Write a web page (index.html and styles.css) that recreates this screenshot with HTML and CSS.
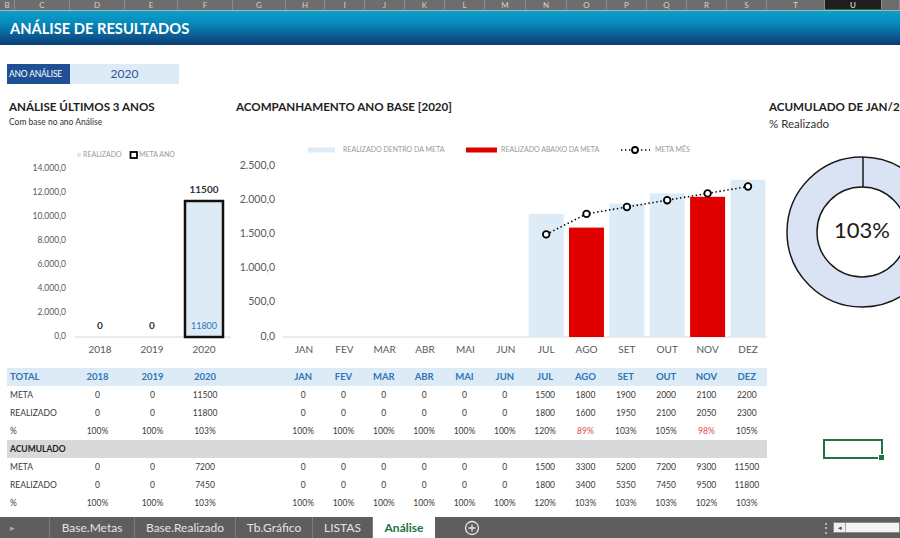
FILE: index.html
```html
<!DOCTYPE html>
<html lang="pt-BR">
<head>
  <meta charset="UTF-8" />
  <title>Análise de Resultados</title>
  <link rel="stylesheet" href="styles.css">
</head>
<body>

  <!-- Spreadsheet column headers -->
  <div class="colheads">
    <span>B</span><span>C</span><span>D</span><span>E</span><span>F</span><span>G</span><span>H</span>
    <span>I</span><span>J</span><span>K</span><span>L</span><span>M</span><span>N</span><span>O</span>
    <span>P</span><span>Q</span><span>R</span><span>S</span><span>T</span><span class="sel">U</span><span></span>
  </div>

  <!-- Title bar -->
  <div class="titlebar">ANÁLISE DE RESULTADOS</div>

  <div class="sheet">
    <!-- Year selector -->
    <div class="ano">
      <span class="ano-label">ANO ANÁLISE</span>
      <span class="ano-value">2020</span>
    </div>

    <!-- Charts row -->
    <div class="charts">
      <section class="panel panel-left">
        <div class="panel-head">
          <h2>ANÁLISE ÚLTIMOS 3 ANOS</h2>
          <p>Com base no ano Análise</p>
        </div>
        <svg class="chart" width="236" height="236">
          <rect x="77" y="21" width="4" height="4" fill="#ddebf7"/>
          <text class="lg" x="83" y="23">REALIZADO</text>
          <rect x="130.5" y="20" width="6.5" height="6" fill="#fff" stroke="#000" stroke-width="1.8"/>
          <text class="lg" x="139" y="23">META ANO</text>

          <g class="ax" text-anchor="end">
            <text x="66" y="37">14.000,0</text>
            <text x="66" y="61">12.000,0</text>
            <text x="66" y="85">10.000,0</text>
            <text x="66" y="109">8.000,0</text>
            <text x="66" y="133">6.000,0</text>
            <text x="66" y="157">4.000,0</text>
            <text x="66" y="181">2.000,0</text>
            <text x="66" y="205">0,0</text>
          </g>

          <line x1="75" y1="205" x2="231" y2="205" stroke="#d9d9d9" stroke-width="1"/>
          <rect x="185" y="69" width="38" height="136" fill="#ddebf7" stroke="#111" stroke-width="2.5"/>

          <text class="dl" x="100" y="194" text-anchor="middle">0</text>
          <text class="dl" x="152" y="194" text-anchor="middle">0</text>
          <text class="dl" x="204" y="58" text-anchor="middle">11500</text>
          <text class="dl-in" x="204" y="195" text-anchor="middle">11800</text>

          <g class="cat" text-anchor="middle">
            <text x="100" y="218">2018</text>
            <text x="152" y="218">2019</text>
            <text x="204" y="218">2020</text>
          </g>
        </svg>
      </section>

      <section class="panel panel-mid">
        <div class="panel-head">
          <h2>ACOMPANHAMENTO ANO BASE [2020]</h2>
        </div>
        <svg class="chart" width="532" height="236">
          <!-- legend -->
          <line x1="72" y1="18" x2="99" y2="18" stroke="#ddebf7" stroke-width="5"/>
          <text class="lg" x="107" y="18">REALIZADO DENTRO DA META</text>
          <line x1="230" y1="18" x2="261" y2="18" stroke="#e00000" stroke-width="5"/>
          <text class="lg" x="265" y="18">REALIZADO ABAIXO DA META</text>
          <line x1="385" y1="18" x2="414" y2="18" class="meta-line"/>
          <circle cx="399" cy="18" r="3" class="meta-dot"/>
          <text class="lg" x="419" y="18">META MÊS</text>

          <g class="ax ax-mid" text-anchor="end">
            <text x="39" y="34">2.500,0</text>
            <text x="39" y="68.2">2.000,0</text>
            <text x="39" y="102.4">1.500,0</text>
            <text x="39" y="136.6">1.000,0</text>
            <text x="39" y="170.8">500,0</text>
            <text x="39" y="205">0,0</text>
          </g>

          <line x1="47" y1="205" x2="531" y2="205" stroke="#d9d9d9" stroke-width="1"/>

          <!-- bars -->
          <rect x="292.7" y="81.9" width="35" height="123.1" fill="#ddebf7"/>
          <rect x="333" y="95.6" width="35" height="109.4" fill="#e00000"/>
          <rect x="373.4" y="71.6" width="35" height="133.4" fill="#ddebf7"/>
          <rect x="413.7" y="61.4" width="35" height="143.6" fill="#ddebf7"/>
          <rect x="454.1" y="64.8" width="35" height="140.2" fill="#e00000"/>
          <rect x="494.5" y="47.7" width="35" height="157.3" fill="#ddebf7"/>

          <!-- meta line -->
          <polyline class="meta-line" points="310.2,102.4 350.5,81.9 390.9,75 431.2,68.2 471.6,61.4 512,54.5"/>
          <circle class="meta-dot" cx="310.2" cy="102.4" r="3.3"/>
          <circle class="meta-dot" cx="350.5" cy="81.9" r="3.3"/>
          <circle class="meta-dot" cx="390.9" cy="75" r="3.3"/>
          <circle class="meta-dot" cx="431.2" cy="68.2" r="3.3"/>
          <circle class="meta-dot" cx="471.6" cy="61.4" r="3.3"/>
          <circle class="meta-dot" cx="512" cy="54.5" r="3.3"/>

          <g class="cat" text-anchor="middle">
            <text x="68" y="218">JAN</text>
            <text x="108.4" y="218">FEV</text>
            <text x="148.7" y="218">MAR</text>
            <text x="189.1" y="218">ABR</text>
            <text x="229.4" y="218">MAI</text>
            <text x="269.8" y="218">JUN</text>
            <text x="310.2" y="218">JUL</text>
            <text x="350.5" y="218">AGO</text>
            <text x="390.9" y="218">SET</text>
            <text x="431.2" y="218">OUT</text>
            <text x="471.6" y="218">NOV</text>
            <text x="512" y="218">DEZ</text>
          </g>
        </svg>
      </section>

      <section class="panel panel-right">
        <div class="panel-head">
          <h2>ACUMULADO DE JAN/2020</h2>
          <p>% Realizado</p>
        </div>
        <svg class="chart" width="132" height="236">
          <circle cx="94" cy="100" r="75" fill="#dae3f3" stroke="#1a1a1a" stroke-width="1.5"/>
          <circle cx="94" cy="100" r="45" fill="#fff" stroke="#1a1a1a" stroke-width="1.5"/>
          <line x1="95" y1="25" x2="95" y2="55" stroke="#1a1a1a" stroke-width="1.5"/>
          <text class="donut-val" x="94" y="100" text-anchor="middle">103%</text>
        </svg>
      </section>
    </div>

    <!-- Data table -->
    <div class="grid">
      <div class="hd lbl">TOTAL</div><div class="hd">2018</div><div class="hd">2019</div><div class="hd">2020</div><div class="hd"></div>
      <div class="hd">JAN</div><div class="hd">FEV</div><div class="hd">MAR</div><div class="hd">ABR</div><div class="hd">MAI</div><div class="hd">JUN</div>
      <div class="hd">JUL</div><div class="hd">AGO</div><div class="hd">SET</div><div class="hd">OUT</div><div class="hd">NOV</div><div class="hd">DEZ</div>

      <div class="lbl">META</div><div>0</div><div>0</div><div>11500</div><div></div>
      <div>0</div><div>0</div><div>0</div><div>0</div><div>0</div><div>0</div>
      <div>1500</div><div>1800</div><div>1900</div><div>2000</div><div>2100</div><div>2200</div>

      <div class="lbl">REALIZADO</div><div>0</div><div>0</div><div>11800</div><div></div>
      <div>0</div><div>0</div><div>0</div><div>0</div><div>0</div><div>0</div>
      <div>1800</div><div>1600</div><div>1950</div><div>2100</div><div>2050</div><div>2300</div>

      <div class="lbl">%</div><div>100%</div><div>100%</div><div>103%</div><div></div>
      <div>100%</div><div>100%</div><div>100%</div><div>100%</div><div>100%</div><div>100%</div>
      <div>120%</div><div class="neg">89%</div><div>103%</div><div>105%</div><div class="neg">98%</div><div>105%</div>

      <div class="band">ACUMULADO</div>

      <div class="lbl">META</div><div>0</div><div>0</div><div>7200</div><div></div>
      <div>0</div><div>0</div><div>0</div><div>0</div><div>0</div><div>0</div>
      <div>1500</div><div>3300</div><div>5200</div><div>7200</div><div>9300</div><div>11500</div>

      <div class="lbl">REALIZADO</div><div>0</div><div>0</div><div>7450</div><div></div>
      <div>0</div><div>0</div><div>0</div><div>0</div><div>0</div><div>0</div>
      <div>1800</div><div>3400</div><div>5350</div><div>7450</div><div>9500</div><div>11800</div>

      <div class="lbl">%</div><div>100%</div><div>100%</div><div>103%</div><div></div>
      <div>100%</div><div>100%</div><div>100%</div><div>100%</div><div>100%</div><div>100%</div>
      <div>120%</div><div>103%</div><div>103%</div><div>103%</div><div>102%</div><div>103%</div>
    </div>

    <!-- Active cell selection -->
    <div class="sel-cell"></div>
  </div>

  <!-- Sheet tabs -->
  <div class="tabs">
    <div class="tab-nav">&#9656;</div>
    <div class="tab tab-metas">Base.Metas</div>
    <div class="tab tab-real">Base.Realizado</div>
    <div class="tab tab-graf">Tb.Gráfico</div>
    <div class="tab tab-listas">LISTAS</div>
    <div class="tab active">Análise</div>
    <svg class="add-sheet" width="16" height="16" viewBox="0 0 16 16">
      <circle cx="8" cy="8" r="6.5" fill="none" stroke="#e6e6e6" stroke-width="1.3"/>
      <path d="M8 4.5v7M4.5 8h7" stroke="#e6e6e6" stroke-width="1.3"/>
    </svg>
    <div class="tabs-fill"></div>
    <div class="tabs-more">&#8942;</div>
    <div class="hscroll">
      <span class="hscroll-btn">&#9666;</span>
      <span class="hscroll-track"></span>
    </div>
  </div>

</body>
</html>
```

FILE: styles.css
```css
/* Basic reset */
* {
  box-sizing: border-box;
  margin: 0;
  padding: 0;
}
body {
  width: 900px;
  height: 538px;
  overflow: hidden;
  font-family: Lato, "Open Sans", sans-serif;
  background: #fff;
  color: #3a3a3a;
}

/* Column header strip */
.colheads {
  display: grid;
  grid-template-columns: 15px 55px 55px 53px 55px 53px 39px 40px 40px 40px 40px 41px 41px 40px 40px 40px 40px 40px 58px 57px 18px;
  height: 11px;
  background: #6d6d6d;
  border-bottom: 1px solid #aab4bb;
}
.colheads span {
  border-right: 1px solid #8c8c8c;
  color: #d2d2d2;
  font-size: 8px;
  line-height: 10px;
  text-align: center;
  overflow: hidden;
}
.colheads .sel {
  background: #1e1e1e;
  color: #eee;
  border-bottom: 1px solid #217346;
}

/* Title bar */
.titlebar {
  height: 34px;
  line-height: 34px;
  padding-left: 10px;
  background: linear-gradient(to bottom, #0aa0cc 0%, #078bbb 35%, #0a6198 70%, #0c3a72 100%);
  color: #fff;
  font-size: 14.7px;
  font-weight: 700;
}

/* Sheet area */
.sheet {
  position: relative;
  height: 472px;
  padding-top: 19px;
}

/* Year selector */
.ano {
  display: flex;
  width: 172px;
  height: 20px;
  margin-left: 7px;
}
.ano-label {
  width: 63px;
  background: #1f4f95;
  color: #fff;
  font-size: 8.5px;
  line-height: 20px;
  padding-left: 2px;
  letter-spacing: -0.2px;
}
.ano-value {
  flex: 1;
  background: #ddebf7;
  color: #2f5597;
  font-size: 12px;
  line-height: 20px;
  text-align: center;
}

/* Charts row */
.charts {
  display: flex;
  height: 272px;
  margin-top: 12px;
}
.panel {
  display: flex;
  flex-direction: column;
}
.panel-head {
  height: 36px;
  padding-top: 4px;
  white-space: nowrap;
}
.panel-head h2 {
  font-size: 11.6px;
  line-height: 14px;
  font-weight: 700;
  color: #222;
}
.panel-head p {
  font-size: 8.5px;
  line-height: 12px;
  margin-top: 2px;
  color: #333;
}
.panel-left {
  width: 236px;
}
.panel-left .panel-head {
  padding-left: 9px;
}
.panel-mid {
  width: 532px;
}
.panel-right {
  width: 132px;
  overflow: hidden;
}
.panel-right .panel-head {
  padding-left: 1px;
}
.panel-right .panel-head p {
  font-size: 11.5px;
  line-height: 14px;
  margin-top: 3px;
}

/* Chart text */
.chart text {
  font-family: Lato, sans-serif;
  fill: #595959;
  dominant-baseline: middle;
}
.chart .lg {
  font-size: 7px;
  fill: #9a9a9a;
}
.chart .ax text {
  font-size: 8.5px;
}
.chart .ax-mid text {
  font-size: 10.5px;
}
.chart .cat text {
  font-size: 10px;
}
.chart .dl {
  font-size: 10px;
  font-weight: 700;
  fill: #333;
}
.chart .dl-in {
  font-size: 9px;
  fill: #2e75b6;
}
.chart .donut-val {
  font-size: 22px;
  fill: #1a1a1a;
}
.meta-line {
  fill: none;
  stroke: #000;
  stroke-width: 1.6;
  stroke-dasharray: 1.4 2.6;
}
.meta-dot {
  fill: #fff;
  stroke: #000;
  stroke-width: 1.8;
}

/* Data table */
.grid {
  display: grid;
  grid-template-columns: 63px 55px 55px 50px 53px repeat(12, 40.33px);
  width: 760px;
  margin-left: 7px;
  font-size: 8.5px;
  color: #3a3a3a;
}
.grid div {
  height: 18px;
  line-height: 18px;
  text-align: center;
}
.grid .lbl {
  text-align: left;
  padding-left: 3px;
}
.grid .hd {
  background: #ddebf7;
  color: #2e75b6;
  font-weight: 700;
  font-size: 9.5px;
}
.grid .band {
  grid-column: 1 / -1;
  background: #d9d9d9;
  text-align: left;
  padding-left: 3px;
  font-weight: 700;
  color: #222;
}
.grid .neg {
  color: #e0474c;
}

/* Active cell */
.sel-cell {
  position: absolute;
  left: 823px;
  top: 394px;
  width: 60px;
  height: 20px;
  border: 2px solid #217346;
}
.sel-cell::after {
  content: "";
  position: absolute;
  right: -4px;
  bottom: -4px;
  width: 5px;
  height: 5px;
  background: #217346;
  border: 1px solid #fff;
}

/* Sheet tabs */
.tabs {
  display: flex;
  align-items: stretch;
  height: 21px;
  background: #5e5e5e;
  color: #e4e4e4;
  font-size: 12px;
}
.tab-nav {
  width: 50px;
  padding-left: 10px;
  line-height: 21px;
  font-size: 9px;
  color: #aaa;
  border-right: 1px solid #7c7c7c;
}
.tab {
  line-height: 21px;
  text-align: center;
  border-right: 1px solid #7c7c7c;
}
.tab-metas { width: 85px; }
.tab-real { width: 101px; }
.tab-graf { width: 77px; }
.tab-listas { width: 60px; }
.tab.active {
  width: 62px;
  background: #fff;
  color: #217346;
  font-weight: 700;
  border-right: none;
}
.add-sheet {
  align-self: center;
  margin-left: 29px;
}
.tabs-fill {
  flex: 1;
}
.tabs-more {
  width: 14px;
  line-height: 21px;
  text-align: center;
  color: #ddd;
  font-size: 12px;
}
.hscroll {
  display: flex;
  align-self: center;
  width: 67px;
  height: 11px;
  border: 1px solid #8a8a8a;
  background: #dcdcdc;
}
.hscroll-btn {
  width: 12px;
  font-size: 7px;
  line-height: 9px;
  text-align: center;
  color: #444;
  background: #f0f0f0;
  border-right: 1px solid #aaa;
}
.hscroll-track {
  flex: 1;
  background: #f4f4f4;
}
```
